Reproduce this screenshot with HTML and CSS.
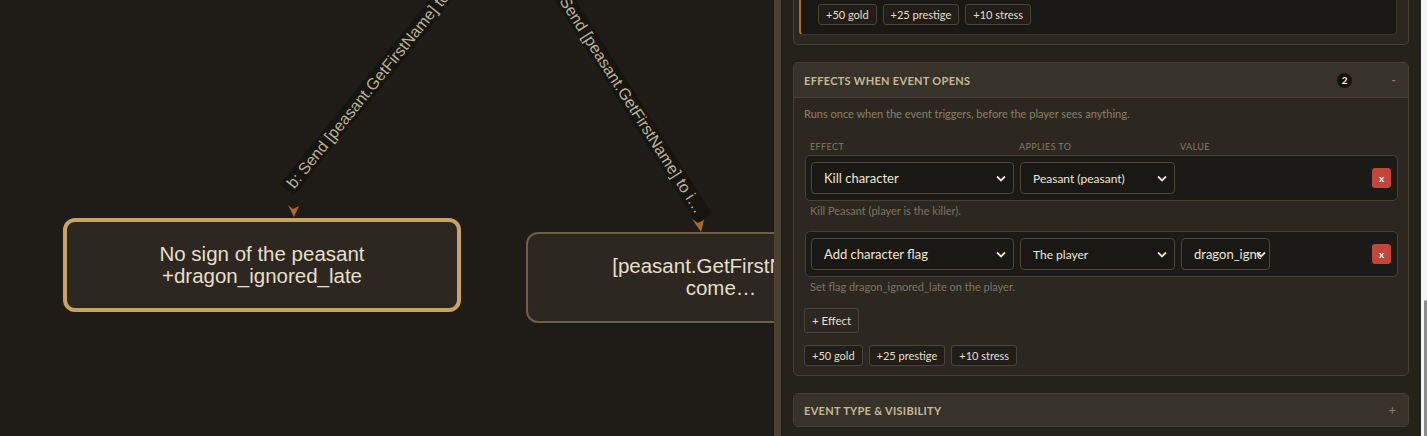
FILE: index.html
```html
<!DOCTYPE html>
<html lang="en">
<head>
    <meta charset="UTF-8">
    <meta name="viewport" content="width=device-width, initial-scale=1.0">
    <title>Event Editor</title>
    <link rel="stylesheet" href="styles.css">
</head>
<body>

    <div class="app">
        <div class="canvas">
            <svg class="edges" width="774" height="436" viewBox="0 0 774 436">
                <!-- b: edge going down-left to the first outcome -->
                <g transform="translate(290,186) rotate(-51)">
                    <rect class="edge-bg" x="-5" y="-9" width="280" height="18"></rect>
                    <text class="edge-label" x="0" y="5.5">b: Send [peasant.GetFirstName] to i…</text>
                </g>
                <path class="arrow" d="M288,205 L293,209 L299,206 L294,217 Z"></path>

                <!-- a: edge going down-right to the second outcome -->
                <g transform="translate(554,-17) rotate(57.4)">
                    <rect class="edge-bg" x="-5" y="-9" width="284" height="18"></rect>
                    <text class="edge-label" x="0" y="5.5">a: Send [peasant.GetFirstName] to i…</text>
                </g>
                <path class="arrow" d="M692,219 L698,223 L704,220 L701,232 Z"></path>
            </svg>

            <div class="node node-selected node-b">No sign of the peasant<br>+dragon_ignored_late</div>
            <div class="node node-a">[peasant.GetFirstName]<br>come…</div>
        </div>

        <div class="splitter"></div>

        <aside class="inspector">
            <div class="inspector-scroll">

                <section class="card card-tail">
                    <div class="outcome">
                        <div class="chips">
                            <span class="chip">+50 gold</span>
                            <span class="chip">+25 prestige</span>
                            <span class="chip">+10 stress</span>
                        </div>
                    </div>
                </section>

                <section class="card">
                    <header class="card-head">
                        <span class="card-title">Effects when event opens</span>
                        <span class="count">2</span>
                        <span class="toggle">-</span>
                    </header>
                    <div class="card-body">
                        <p class="hint">Runs once when the event triggers, before the player sees anything.</p>

                        <div class="effect-cols">
                            <span>Effect</span>
                            <span>Applies to</span>
                            <span>Value</span>
                        </div>

                        <div class="effect-row">
                            <div class="select">
                                <span>Kill character</span>
                                <svg class="chev" width="10" height="7" viewBox="0 0 10 7"><path d="M1 1.5 L5 5.5 L9 1.5"></path></svg>
                            </div>
                            <div class="select select-sm">
                                <span>Peasant (peasant)</span>
                                <svg class="chev" width="10" height="7" viewBox="0 0 10 7"><path d="M1 1.5 L5 5.5 L9 1.5"></path></svg>
                            </div>
                            <div></div>
                            <div></div>
                            <button class="remove">x</button>
                        </div>
                        <p class="effect-note">Kill Peasant (player is the killer).</p>

                        <div class="effect-row second">
                            <div class="select">
                                <span>Add character flag</span>
                                <svg class="chev" width="10" height="7" viewBox="0 0 10 7"><path d="M1 1.5 L5 5.5 L9 1.5"></path></svg>
                            </div>
                            <div class="select select-sm">
                                <span>The player</span>
                                <svg class="chev" width="10" height="7" viewBox="0 0 10 7"><path d="M1 1.5 L5 5.5 L9 1.5"></path></svg>
                            </div>
                            <div class="select select-value">
                                <span>dragon_ignored_late</span>
                                <svg class="chev" width="10" height="7" viewBox="0 0 10 7"><path d="M1 1.5 L5 5.5 L9 1.5"></path></svg>
                            </div>
                            <div></div>
                            <button class="remove">x</button>
                        </div>
                        <p class="effect-note">Set flag dragon_ignored_late on the player.</p>

                        <button class="add-btn">+ Effect</button>

                        <div class="chips chips-body">
                            <span class="chip">+50 gold</span>
                            <span class="chip">+25 prestige</span>
                            <span class="chip">+10 stress</span>
                        </div>
                    </div>
                </section>

                <section class="card">
                    <header class="card-head closed">
                        <span class="card-title">Event type &amp; visibility</span>
                        <span class="toggle">+</span>
                    </header>
                </section>

            </div>
        </aside>

        <div class="scrollbar"><div class="thumb"></div></div>
    </div>

</body>
</html>
```

FILE: styles.css
```css
* {
    box-sizing: border-box;
}
body {
    margin: 0;
    background-color: #1f1c17;
    font-family: Lato, "Liberation Sans", sans-serif;
    overflow: hidden;
}
.app {
    display: flex;
    height: 436px;
}

/* graph canvas */
.canvas {
    position: relative;
    width: 774px;
    flex: none;
    overflow: hidden;
    background: #1f1c17;
}
.edges {
    position: absolute;
    left: 0;
    top: 0;
}
.edge-bg {
    fill: #17150f;
}
.edge-label {
    font-family: "Liberation Sans", Arial, sans-serif;
    font-size: 16px;
    fill: #bcb29c;
}
.arrow {
    fill: #a8672d;
}
.node {
    position: absolute;
    display: flex;
    align-items: center;
    justify-content: center;
    text-align: center;
    font-family: "Liberation Sans", Arial, sans-serif;
    font-size: 20.5px;
    line-height: 22px;
    color: #e7decb;
    background: #2c2821;
    border: 2px solid #6d6048;
    border-radius: 12px;
}
.node-selected {
    border: 4px solid #c9a265;
}
.node-b {
    left: 63px;
    top: 218px;
    width: 398px;
    height: 94px;
}
.node-a {
    left: 526px;
    top: 232px;
    width: 390px;
    height: 91px;
    padding-bottom: 2px;
    white-space: nowrap;
}

.splitter {
    width: 7px;
    flex: none;
    background: #4a4335;
}

/* right side inspector */
.inspector {
    width: 640px;
    flex: none;
    overflow: hidden;
    background: #25221c;
    padding: 0 12px;
}
.inspector-scroll {
    margin-top: -6px;
}
.card {
    border: 1px solid #463f32;
    border-radius: 5px;
    background: #2c2821;
    margin-bottom: 17px;
    overflow: hidden;
}
.card-tail {
    border-top: none;
    border-radius: 0 0 5px 5px;
}
.outcome {
    margin: 0 11px 9px 5px;
    padding: 10px 17px 9px;
    background: #1a1814;
    border: 1px solid #3a3429;
    border-left: 2px solid #b06d30;
    border-top: none;
    border-radius: 0 0 4px 4px;
}
.chips {
    display: flex;
    gap: 6px;
}
.chip {
    height: 21px;
    padding: 0 7px;
    display: flex;
    align-items: center;
    font-size: 11px;
    color: #e8dfcb;
    background: #211e19;
    border: 1px solid #4a4336;
    border-radius: 3px;
}

.card-head {
    display: flex;
    align-items: center;
    height: 35px;
    padding: 0 12px 0 10px;
    background: #37322a;
    border-bottom: 1px solid #463f32;
}
.card-head.closed {
    height: 32px;
    border-bottom: none;
}
.card-title {
    font-size: 11px;
    font-weight: 700;
    letter-spacing: 0.3px;
    text-transform: uppercase;
    color: #c9b794;
}
.count {
    margin-left: auto;
    margin-right: 38px;
    width: 17px;
    height: 17px;
    border-radius: 50%;
    background: #151310;
    border: 1px solid #3c362b;
    color: #f2ede2;
    font-size: 10px;
    font-weight: 700;
    display: flex;
    align-items: center;
    justify-content: center;
}
.toggle {
    color: #8d7e62;
    font-size: 13px;
}
.card-head.closed .toggle {
    margin-left: auto;
}

.card-body {
    padding: 9px 10px 9px 10px;
}
.hint {
    margin: 0;
    font-size: 11px;
    line-height: 14px;
    color: #8c7f67;
}
.effect-cols,
.effect-row {
    display: grid;
    grid-template-columns: 203px 155px 89px 1fr 19px;
    column-gap: 6px;
}
.effect-cols {
    margin-top: 20px;
    padding: 0 6px 0 6px;
    font-size: 9px;
    line-height: 12px;
    letter-spacing: 0.4px;
    text-transform: uppercase;
    color: #857861;
}
.effect-row {
    margin: 2px 0 0 1px;
    padding: 6px 6px 6px 5px;
    align-items: center;
    background: #1c1a16;
    border: 1px solid #463f32;
    border-radius: 5px;
}
.effect-row.second {
    margin-top: 13px;
}
.select {
    height: 32px;
    display: flex;
    align-items: center;
    padding: 0 7px 0 12px;
    background: #1a1814;
    border: 1px solid #4d4537;
    border-radius: 4px;
    font-size: 13px;
    color: #efe7d4;
    white-space: nowrap;
}
.select span {
    flex: 1;
    min-width: 0;
    overflow: hidden;
}
.select-sm {
    font-size: 12px;
}
.select-value {
    padding-right: 3px;
}
.select-value .chev {
    margin-left: -5px;
}
.chev {
    flex: none;
    margin-left: 2px;
}
.chev path {
    fill: none;
    stroke: #e9e1cf;
    stroke-width: 1.8;
}
.remove {
    width: 19px;
    height: 20px;
    padding: 0;
    border: none;
    border-radius: 3px;
    background: #c4463a;
    color: #fff;
    font-family: Lato, sans-serif;
    font-size: 10px;
    font-weight: 700;
    cursor: pointer;
}
.effect-note {
    margin: 3px 0 0 6px;
    font-size: 11px;
    line-height: 14px;
    color: #7e735f;
}
.add-btn {
    display: block;
    margin-top: 14px;
    height: 25px;
    padding: 0 7px;
    background: #2c2821;
    border: 1px solid #4a4336;
    border-radius: 3px;
    color: #e8dfcb;
    font-family: Lato, sans-serif;
    font-size: 11.5px;
    cursor: pointer;
}
.chips-body {
    margin-top: 12px;
}

/* page scrollbar */
.scrollbar {
    width: 6px;
    flex: none;
    background: #f4f4f4;
    position: relative;
}
.thumb {
    position: absolute;
    right: 0;
    top: 300px;
    bottom: 0;
    width: 3px;
    background: #8c8c8c;
    border-radius: 2px 2px 0 0;
}
```
